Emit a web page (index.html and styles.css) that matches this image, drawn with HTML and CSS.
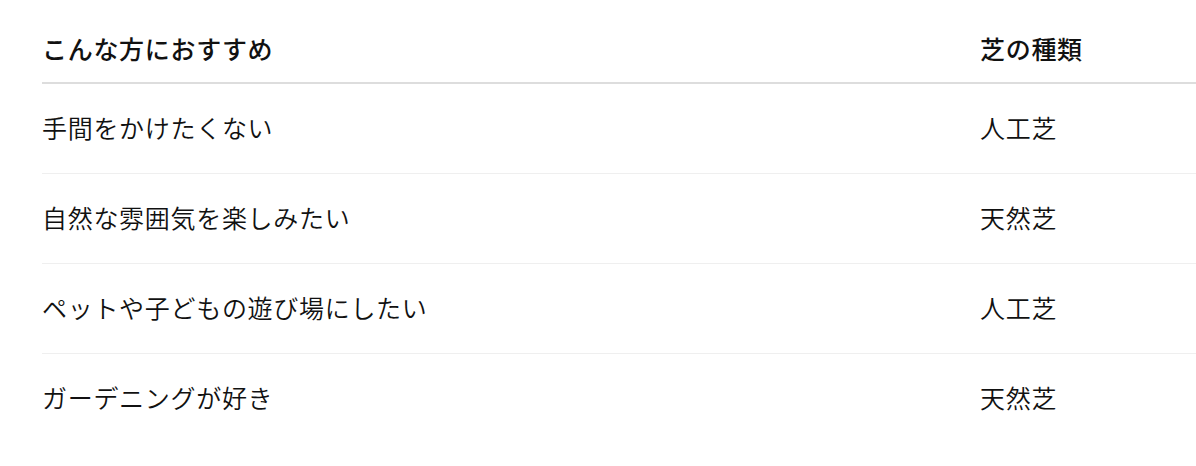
FILE: index.html
```html
<!DOCTYPE html>
<html lang="ja">
<head>
<meta charset="utf-8">
<link rel="stylesheet" href="styles.css">
</head>
<body>
<div class="wrap">
  <table class="tbl">
    <thead>
      <tr><th class="c1">こんな方におすすめ</th><th class="c2">芝の種類</th></tr>
    </thead>
    <tbody>
      <tr><td>手間をかけたくない</td><td>人工芝</td></tr>
      <tr><td>自然な雰囲気を楽しみたい</td><td>天然芝</td></tr>
      <tr><td>ペットや子どもの遊び場にしたい</td><td>人工芝</td></tr>
      <tr><td>ガーデニングが好き</td><td>天然芝</td></tr>
    </tbody>
  </table>
</div>
</body>
</html>
```
FILE: styles.css
```css
html, body {
  margin: 0;
  padding: 0;
  background: #fff;
}
.wrap {
  padding: 14px 0 0 42px;
}
.tbl {
  width: 1154px;
  border-collapse: collapse;
  font-family: "Noto Sans CJK JP", "Noto Sans", sans-serif;
  font-size: 25px;
  letter-spacing: 0.7px;
  color: #111;
}
.tbl th, .tbl td {
  text-align: left;
  padding: 0;
  line-height: 36px;
  vertical-align: middle;
}
.tbl th {
  font-weight: 500;
  padding: 16px 0 16px;
  border-bottom: 2px solid #dddddd;
}
.c1 { width: 938px; }
.tbl td {
  padding: 25px 0 28px;
  font-weight: 350;
  border-bottom: 1px solid #efefef;
}
.tbl tbody tr:last-child td {
  border-bottom: none;
}
```
